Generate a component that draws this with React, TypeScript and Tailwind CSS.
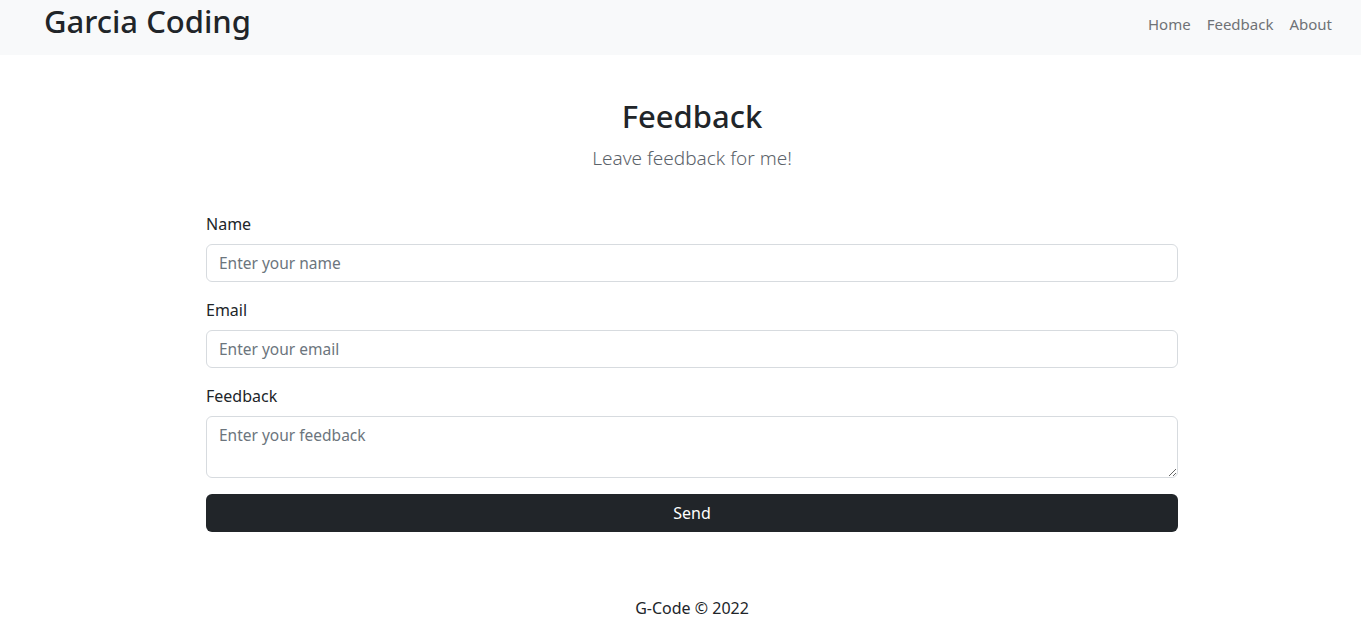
import React from "react";

const font = "font-['Noto_Sans','Open_Sans',sans-serif]";

function Field({ label, placeholder }: { label: string; placeholder: string }) {
  return (
    <div className="mb-4">
      <label className="mb-2 block text-[16px] leading-6 text-[#212529]">{label}</label>
      <input
        type="text"
        placeholder={placeholder}
        className="block h-[38px] w-full rounded-[6px] border border-[#d7dbdf] bg-white px-3 text-[15.5px] text-[#212529] placeholder:text-[#6c757d] outline-none"
      />
    </div>
  );
}

export default function App() {
  return (
    <div className={`min-h-screen bg-white ${font}`}>
      <nav className="flex h-[55px] items-start justify-between bg-[#f8f9fa] pl-[44px] pr-[21px]">
        <a href="#" className="mt-[6px] text-[31px] font-medium leading-none text-[#212529]">
          Garcia Coding
        </a>
        <ul className="mt-[4px] flex items-center">
          {["Home", "Feedback", "About"].map((l) => (
            <li key={l}>
              <a href="#" className="block px-2 py-2 text-[15px] leading-6 text-[#6f7276]">
                {l}
              </a>
            </li>
          ))}
        </ul>
      </nav>

      <main className="ml-[206px] w-[972px]">
        <div className="pt-[43px] text-center">
          <h2 className="text-[31px] font-medium leading-[1.2] text-[#212529]">Feedback</h2>
          <p className="mt-[9px] text-[19px] font-light leading-[1.5] text-[#5c636a]">
            Leave feedback for me!
          </p>
        </div>

        <form className="mt-[39px]" onSubmit={(e) => e.preventDefault()}>
          <Field label="Name" placeholder="Enter your name" />
          <Field label="Email" placeholder="Enter your email" />
          <div className="mb-4">
            <label className="mb-2 block text-[16px] leading-6 text-[#212529]">Feedback</label>
            <textarea
              placeholder="Enter your feedback"
              className="block h-[62px] w-full rounded-[6px] border border-[#d7dbdf] bg-white px-3 py-[6px] text-[15.5px] leading-6 text-[#212529] placeholder:text-[#6c757d] outline-none"
            />
          </div>
          <button
            type="submit"
            className="block h-[38px] w-full rounded-[6px] bg-[#212529] text-[16px] text-white"
          >
            Send
          </button>
        </form>

        <footer className="pt-[64px] pb-4 text-center text-[16px] leading-6 text-[#212529]">
          G-Code © 2022
        </footer>
      </main>
    </div>
  );
}
